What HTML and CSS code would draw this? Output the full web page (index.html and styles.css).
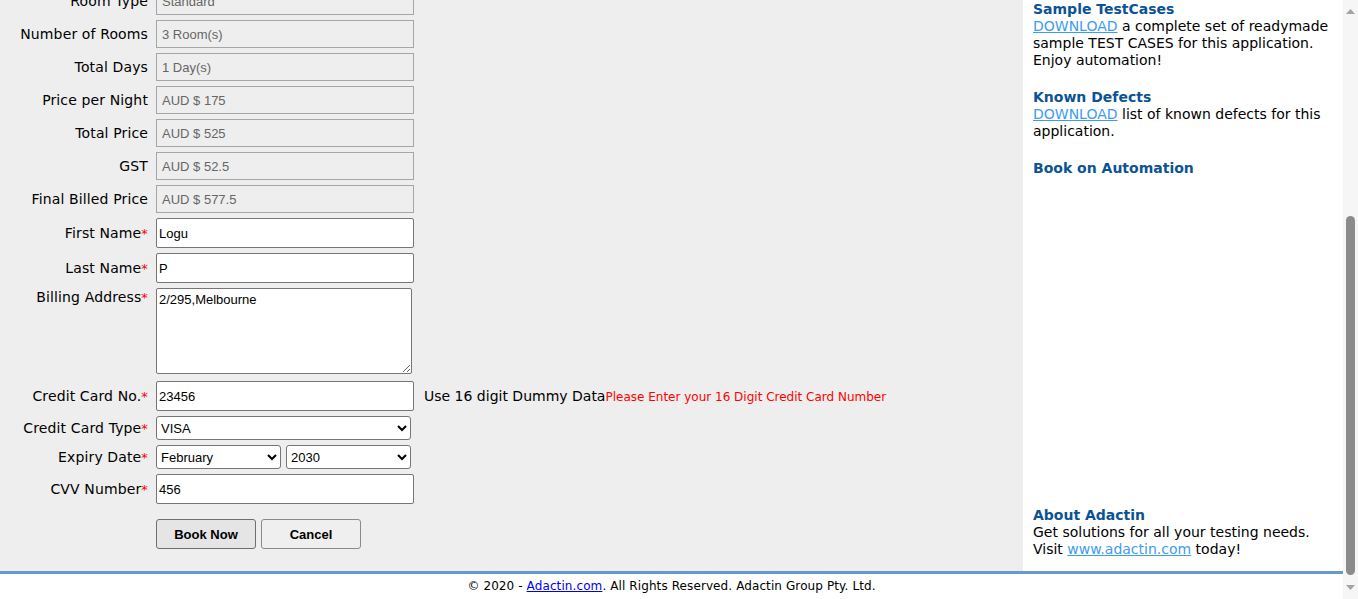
FILE: index.html
```html
<!DOCTYPE html>
<html>
<head>
<meta charset="utf-8">
<title>Adactin.com - Book A Hotel</title>
<link rel="stylesheet" href="styles.css">
</head>
<body>
<div class="viewport">
  <div class="page">
    <div class="main">
      <div class="content">
        <form class="booking">
          <div class="lbl">Hotel Name</div>
          <div class="ctl"><input class="ro" readonly value="Hotel Creek"></div>
          <div class="lbl">Location</div>
          <div class="ctl"><input class="ro" readonly value="Melbourne"></div>
          <div class="lbl">Room Type</div>
          <div class="ctl"><input class="ro" readonly value="Standard"></div>
          <div class="lbl">Number of Rooms</div>
          <div class="ctl"><input class="ro" readonly value="3 Room(s)"></div>
          <div class="lbl">Total Days</div>
          <div class="ctl"><input class="ro" readonly value="1 Day(s)"></div>
          <div class="lbl">Price per Night</div>
          <div class="ctl"><input class="ro" readonly value="AUD $ 175"></div>
          <div class="lbl">Total Price</div>
          <div class="ctl"><input class="ro" readonly value="AUD $ 525"></div>
          <div class="lbl">GST</div>
          <div class="ctl"><input class="ro" readonly value="AUD $ 52.5"></div>
          <div class="lbl">Final Billed Price</div>
          <div class="ctl"><input class="ro" readonly value="AUD $ 577.5"></div>

          <div class="lbl">First Name<span class="req">*</span></div>
          <div class="ctl"><input class="txt" type="text" value="Logu"></div>
          <div class="lbl">Last Name<span class="req">*</span></div>
          <div class="ctl"><input class="txt" type="text" value="P"></div>
          <div class="lbl lbl-top">Billing Address<span class="req">*</span></div>
          <div class="ctl ctl-area"><textarea class="area">2/295,Melbourne</textarea></div>
          <div class="lbl">Credit Card No.<span class="req">*</span></div>
          <div class="ctl ctl-hint"><input class="txt" type="text" value="23456"><span class="hint">Use 16 digit Dummy Data<span class="err">Please Enter your 16 Digit Credit Card Number</span></span></div>
          <div class="lbl">Credit Card Type<span class="req">*</span></div>
          <div class="ctl"><select class="sel sel-wide">
            <option>American Express</option>
            <option selected>VISA</option>
            <option>Master Card</option>
            <option>Other</option>
          </select></div>
          <div class="lbl">Expiry Date<span class="req">*</span></div>
          <div class="ctl ctl-pair"><select class="sel sel-half">
            <option>January</option>
            <option selected>February</option>
            <option>March</option>
          </select><select class="sel sel-half">
            <option>2029</option>
            <option selected>2030</option>
          </select></div>
          <div class="lbl">CVV Number<span class="req">*</span></div>
          <div class="ctl"><input class="txt" type="text" value="456"></div>
          <div class="lbl"></div>
          <div class="ctl ctl-btns"><button type="button" class="btn btn-primary">Book Now</button><button type="button" class="btn">Cancel</button></div>
        </form>
      </div>
      <aside class="sidebar">
        <div class="sec">
          <div class="sec-title">Sample TestCases</div>
          <div><a href="#" class="dl">DOWNLOAD</a> a complete set of readymade sample TEST CASES for this application. Enjoy automation!</div>
        </div>
        <div class="sec">
          <div class="sec-title">Known Defects</div>
          <div><a href="#" class="dl">DOWNLOAD</a> list of known defects for this application.</div>
        </div>
        <div class="sec">
          <div class="sec-title">Book on Automation</div>
        </div>
        <div class="sec sec-bottom">
          <div class="sec-title">About Adactin</div>
          <div>Get solutions for all your testing needs. Visit <a href="#" class="dl">www.adactin.com</a> today!</div>
        </div>
      </aside>
    </div>
    <div class="footer">© 2020 - <a href="#" class="foot-link">Adactin.com</a>. All Rights Reserved. Adactin Group Pty. Ltd.</div>
  </div>
  <div class="scrollbar">
    <div class="sb-arrow"><svg width="9" height="5" viewBox="0 0 9 5"><polygon points="0,5 4.5,0 9,5" fill="#a3a3a3"/></svg></div>
    <div class="sb-space"></div>
    <div class="sb-thumb"></div>
    <div class="sb-gap"></div>
    <div class="sb-arrow"><svg width="9" height="5" viewBox="0 0 9 5"><polygon points="0,0 9,0 4.5,5" fill="#a3a3a3"/></svg></div>
  </div>
</div>
</body>
</html>
```

FILE: styles.css
```css
html, body {
  margin: 0;
  padding: 0;
  height: 100%;
  overflow: hidden;
}

body {
  font-family: "DejaVu Sans", Verdana, sans-serif;
  font-size: 14px;
  color: #000;
  background: #fff;
}

.viewport {
  display: flex;
  width: 1358px;
  height: 599px;
}

.page {
  width: 1343px;
  display: flex;
  flex-direction: column;
}

.main {
  flex: 1;
  min-height: 0;
  display: flex;
}

.content {
  width: 1023px;
  background: #eeeeee;
  display: flex;
  flex-direction: column;
  justify-content: flex-end;
  overflow: hidden;
  padding-bottom: 22px;
  box-sizing: border-box;
}

.booking {
  display: grid;
  grid-template-columns: 148px 1fr;
  column-gap: 8px;
  row-gap: 5px;
  margin: 0;
}

.lbl {
  display: flex;
  align-items: center;
  justify-content: flex-end;
  line-height: 17px;
  white-space: nowrap;
  letter-spacing: 0.13px;
}

.lbl-top {
  align-items: flex-start;
  padding-top: 1px;
}

.req {
  color: #ff0000;
  font-size: 13px;
}

.ctl {
  display: flex;
  align-items: center;
}

.ro {
  box-sizing: border-box;
  width: 258px;
  height: 28px;
  margin: 0;
  padding: 0 5px;
  border: 1px solid #a6a6a6;
  background: #eeeeee;
  color: #666;
  font-family: "Liberation Sans", Arial, sans-serif;
  font-size: 13px;
  outline: none;
}

.txt {
  box-sizing: border-box;
  width: 258px;
  height: 30px;
  margin: 0;
  padding: 0 2px;
  border: 1px solid #767676;
  border-radius: 2px;
  background: #fff;
  color: #000;
  font-family: "Liberation Sans", Arial, sans-serif;
  font-size: 13px;
}

.ctl-area {
  margin-bottom: 2px;
}

.area {
  box-sizing: border-box;
  width: 256px;
  height: 86px;
  margin: 0;
  padding: 3px 2px;
  border: 1px solid #767676;
  border-radius: 2px;
  background: #fff;
  color: #000;
  font-family: "Liberation Sans", Arial, sans-serif;
  font-size: 13px;
  line-height: 15px;
}

.hint {
  margin-left: 10px;
  white-space: nowrap;
}

.err {
  color: #ff0000;
  font-size: 12px;
}

.sel {
  box-sizing: border-box;
  height: 24px;
  margin: 0;
  border: 1px solid #767676;
  border-radius: 3px;
  background-color: #fff;
  color: #000;
  font-family: "Liberation Sans", Arial, sans-serif;
  font-size: 13px;
}

.sel-wide {
  width: 255px;
}

.ctl-pair {
  gap: 5px;
}

.sel-half {
  width: 125px;
}

.ctl-btns {
  gap: 5px;
  margin-top: 10px;
}

.btn {
  box-sizing: border-box;
  width: 100px;
  height: 30px;
  margin: 0;
  padding: 0;
  border: 1px solid #8a8a8a;
  border-radius: 3px;
  background: #efefef;
  color: #000;
  font-family: "Liberation Sans", Arial, sans-serif;
  font-size: 13px;
  font-weight: bold;
}

.btn-primary {
  background: #e5e5e5;
  border-color: #6f6f6f;
}

.sidebar {
  width: 320px;
  box-sizing: border-box;
  background: #fff;
  padding: 1px 10px 13px;
  display: flex;
  flex-direction: column;
  line-height: 17px;
}

.sec {
  margin-bottom: 20px;
}

.sec-title {
  font-weight: bold;
  color: #0b5394;
}

.sec-bottom {
  margin-top: auto;
  margin-bottom: 0;
}

.dl {
  color: #3d9cf0;
  text-decoration: underline;
}

.footer {
  border-top: 3px solid #6699cc;
  padding: 5px 0;
  text-align: center;
  font-size: 12px;
  line-height: 15px;
  letter-spacing: 0.1px;
  background: #fff;
}

.foot-link {
  color: #0000ee;
  text-decoration: underline;
}

.scrollbar {
  width: 15px;
  height: 599px;
  background: #f6f6f6;
  display: flex;
  flex-direction: column;
}

.sb-arrow {
  height: 23px;
  display: flex;
  align-items: center;
  justify-content: center;
}

.sb-arrow svg {
  display: block;
}

.sb-space {
  flex: 1;
}

.sb-thumb {
  height: 359px;
  width: 9px;
  margin-left: 3px;
  border-radius: 5px;
  background: #8b8b8b;
}

.sb-gap {
  height: 1px;
}
```
